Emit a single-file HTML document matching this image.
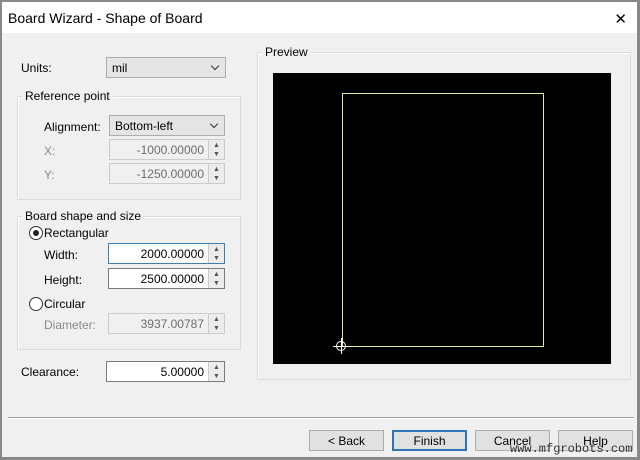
<!DOCTYPE html><html><head><style>
body{margin:0;width:640px;height:460px;background:#888;font-family:"Liberation Sans",sans-serif;font-size:12px;color:#000;position:relative;overflow:hidden}
.a{position:absolute}
.win{left:2px;top:2px;width:635px;height:455px;background:#f0f0f0}
.title{left:2px;top:2px;width:635px;height:31px;background:#fff;font-size:14px}
.grp{border:1px solid #dcdcdc;box-shadow:inset 1px 1px 0 #fff}
.lg{background:#f0f0f0;padding:0 3px}
.combo{background:#e5e5e5;border:1px solid #adadad;box-sizing:border-box;padding:3px 5px}
.combo:after{content:"";position:absolute;right:7px;top:5px;width:5px;height:5px;border-right:1px solid #333;border-bottom:1px solid #333;transform:rotate(45deg)}
.fld{background:#fff;border:1px solid #7a7a7a;box-sizing:border-box;text-align:right;padding:3px 20px 0 0}
.dis{background:#f0f0f0;border-color:#ccc;color:#6d6d6d}
.sp{position:absolute;right:0;top:0;width:16px;height:100%;border-left:1px solid #ccc;background:#ececec;font-size:7px;line-height:9px;text-align:center;color:#555;padding-top:1px;box-sizing:border-box}
.btn{background:#e1e1e1;border:1px solid #adadad;box-sizing:border-box;text-align:center;padding-top:3px;height:21px;width:75px;top:430px}
.gray{color:#8a8a8a}
</style></head><body>
<div class="a win"></div>
<div class="a title"><span class="a" style="left:6px;top:8px">Board Wizard - Shape of Board</span><span class="a" style="right:10px;top:8px;font-size:15px">✕</span></div>

<div class="a" style="left:21px;top:61px">Units:</div>
<div class="a combo" style="left:106px;top:57px;width:120px;height:21px">mil</div>

<div class="a grp" style="left:17px;top:96px;width:222px;height:102px"></div>
<div class="a lg" style="left:22px;top:89px">Reference point</div>
<div class="a" style="left:44px;top:120px">Alignment:</div>
<div class="a combo" style="left:109px;top:115px;width:116px;height:21px">Bottom-left</div>
<div class="a gray" style="left:44px;top:144px">X:</div>
<div class="a fld dis" style="left:109px;top:139px;width:116px;height:21px">-1000.00000<div class="sp">▲<br>▼</div></div>
<div class="a gray" style="left:44px;top:168px">Y:</div>
<div class="a fld dis" style="left:109px;top:163px;width:116px;height:21px">-1250.00000<div class="sp">▲<br>▼</div></div>

<div class="a grp" style="left:17px;top:216px;width:222px;height:132px"></div>
<div class="a lg" style="left:22px;top:209px">Board shape and size</div>
<div class="a" style="left:29px;top:226px;width:12px;height:12px;border:1px solid #333;border-radius:50%;background:#fff"><div class="a" style="left:3px;top:3px;width:6px;height:6px;border-radius:50%;background:#222"></div></div>
<div class="a" style="left:44px;top:226px">Rectangular</div>
<div class="a" style="left:44px;top:248px">Width:</div>
<div class="a fld" style="left:108px;top:243px;width:117px;height:21px;border-color:#3c7fb1">2000.00000<div class="sp">▲<br>▼</div></div>
<div class="a" style="left:44px;top:273px">Height:</div>
<div class="a fld" style="left:108px;top:268px;width:117px;height:21px">2500.00000<div class="sp">▲<br>▼</div></div>
<div class="a" style="left:29px;top:297px;width:12px;height:12px;border:1px solid #333;border-radius:50%;background:#fff"></div>
<div class="a" style="left:44px;top:297px">Circular</div>
<div class="a gray" style="left:44px;top:318px">Diameter:</div>
<div class="a fld dis" style="left:108px;top:313px;width:117px;height:21px">3937.00787<div class="sp">▲<br>▼</div></div>

<div class="a" style="left:21px;top:365px">Clearance:</div>
<div class="a fld" style="left:106px;top:361px;width:119px;height:21px">5.00000<div class="sp">▲<br>▼</div></div>

<div class="a grp" style="left:257px;top:52px;width:372px;height:326px"></div>
<div class="a lg" style="left:262px;top:45px">Preview</div>
<div class="a" style="left:273px;top:73px;width:338px;height:291px;background:#000"></div>
<div class="a" style="left:342px;top:93px;width:200px;height:252px;border:1px solid #e8e8a0"></div>
<div class="a" style="left:336px;top:341px;width:8px;height:8px;border:1px solid #fff;border-radius:50%"></div>
<div class="a" style="left:333px;top:346px;width:16px;height:1px;background:#fff"></div>
<div class="a" style="left:341px;top:338px;width:1px;height:16px;background:#fff"></div>

<div class="a" style="left:8px;top:417px;width:626px;height:1px;background:#a0a0a0;border-bottom:1px solid #fff"></div>
<div class="a btn" style="left:309px">&lt; Back</div>
<div class="a btn" style="left:392px;border:2px solid #2f74b5;padding-top:2px">Finish</div>
<div class="a btn" style="left:475px">Cancel</div>
<div class="a btn" style="left:558px">Help</div>
<div class="a" style="left:510px;top:442px;font-family:'Liberation Mono',monospace;font-size:12px;color:#333">www.mfgrobots.com</div>
</body></html>
